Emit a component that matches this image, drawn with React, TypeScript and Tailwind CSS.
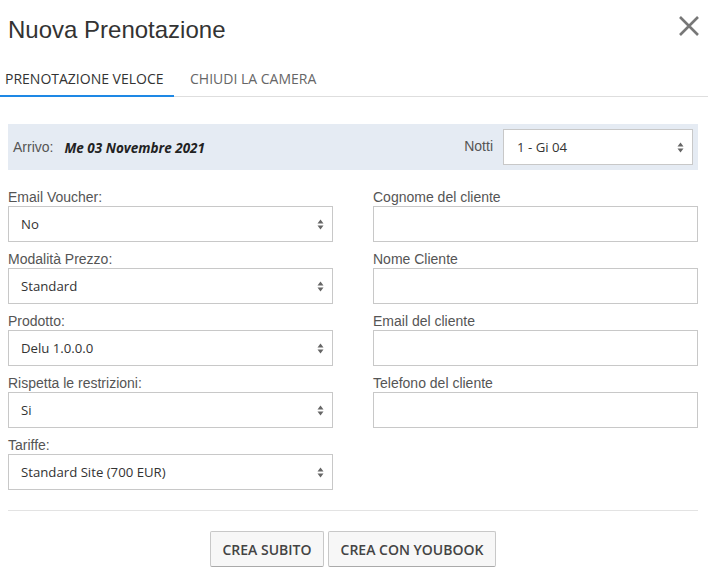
import React from "react";

const SelArrows = () => (
  <svg width="7" height="11" viewBox="0 0 7 11" className="shrink-0">
    <path d="M3.5 0.5 L6.5 4.5 L0.5 4.5 Z" fill="#666" />
    <path d="M3.5 10.5 L6.5 6.5 L0.5 6.5 Z" fill="#666" />
  </svg>
);

const FakeSelect = ({ value, className = "" }: { value: string; className?: string }) => (
  <div
    className={`flex items-center justify-between h-[36px] border border-[#c8c8c8] bg-white pl-[12px] pr-[8px] text-[13.2px] text-[#333] ${className}`}
    style={{ fontFamily: '"Open Sans", sans-serif' }}
  >
    <span className="pt-[2px]">{value}</span>
    <SelArrows />
  </div>
);

const Label = ({ children }: { children: React.ReactNode }) => (
  <div className="text-[14px] leading-[17px] text-[#555]" style={{ fontFamily: '"Liberation Sans", Arial, sans-serif' }}>
    {children}
  </div>
);

const Field = ({ label, children }: { label: string; children: React.ReactNode }) => (
  <div className="mb-[9px]">
    <Label>{label}</Label>
    {children}
  </div>
);

const Input = () => <div className="h-[36px] border border-[#c8c8c8] bg-white" />;

export default function App() {
  return (
    <div className="w-[708px] h-[573px] bg-white overflow-hidden relative" style={{ fontFamily: '"Liberation Sans", Arial, sans-serif' }}>
      {/* header */}
      <div className="flex items-start justify-between pl-[8px] pr-[9px] pt-[14px] h-[58px]">
        <h1 className="text-[24px] leading-[32px] text-[#333]">Nuova Prenotazione</h1>
        <svg width="20" height="20" viewBox="0 0 20 20" className="mt-[2px]">
          <path d="M1 1 L19 19 M19 1 L1 19" stroke="#777" strokeWidth="2.6" strokeLinecap="butt" />
        </svg>
      </div>
      {/* tabs */}
      <div className="flex border-b border-[#dedede] h-[39px]" style={{ fontFamily: '"Open Sans", sans-serif' }}>
        <div className="w-[174px] pl-[5px] pt-[10px] text-[14px] text-[#333] border-b-2 border-[#1e88e5] -mb-[1px]">
          PRENOTAZIONE VELOCE
        </div>
        <div className="pl-[16px] pt-[10px] text-[14px] text-[#666]">CHIUDI LA CAMERA</div>
      </div>
      {/* body */}
      <div className="pl-[8px] pr-[10px] pt-[27px]">
        <div className="flex items-center justify-between h-[46px] bg-[#e5ebf3] pl-[5px] pr-[5px]">
          <div className="flex items-center">
            <span className="text-[14px] text-[#555]">Arrivo:</span>
            <span
              className="ml-[11px] text-[13.5px] font-bold italic text-[#222] mt-[3px]"
              style={{ fontFamily: '"Open Sans", sans-serif' }}
            >
              Me 03 Novembre 2021
            </span>
          </div>
          <div className="flex items-center">
            <span className="text-[14px] text-[#555] mr-[10px] -mt-[2px]">Notti</span>
            <FakeSelect value="1 - Gi 04" className="w-[190px] pl-[13px]" />
          </div>
        </div>

        <div className="grid grid-cols-2 gap-x-[40px] mt-[19px]">
          <div>
            <Field label="Email Voucher:"><FakeSelect value="No" /></Field>
            <Field label="Modalità Prezzo:"><FakeSelect value="Standard" /></Field>
            <Field label="Prodotto:"><FakeSelect value="Delu 1.0.0.0" /></Field>
            <Field label="Rispetta le restrizioni:"><FakeSelect value="Si" /></Field>
            <Field label="Tariffe:"><FakeSelect value="Standard Site (700 EUR)" /></Field>
          </div>
          <div>
            <Field label="Cognome del cliente"><Input /></Field>
            <Field label="Nome Cliente"><Input /></Field>
            <Field label="Email del cliente"><Input /></Field>
            <Field label="Telefono del cliente"><Input /></Field>
          </div>
        </div>

        <div className="border-t border-[#e3e3e3] mt-[11px]" />

        <div className="flex justify-center gap-[4px] mt-[20px]" style={{ fontFamily: '"Open Sans", sans-serif' }}>
          <button className="h-[36px] w-[114px] border border-[#c8c8c8] border-b-[#aaa] bg-[#f7f7f7] text-[14px] font-semibold text-[#444] rounded-[2px]">
            CREA SUBITO
          </button>
          <button className="h-[36px] w-[168px] border border-[#c8c8c8] border-b-[#aaa] bg-[#f7f7f7] text-[14px] font-semibold text-[#444] rounded-[2px]">
            CREA CON YOUBOOK
          </button>
        </div>
      </div>
    </div>
  );
}
